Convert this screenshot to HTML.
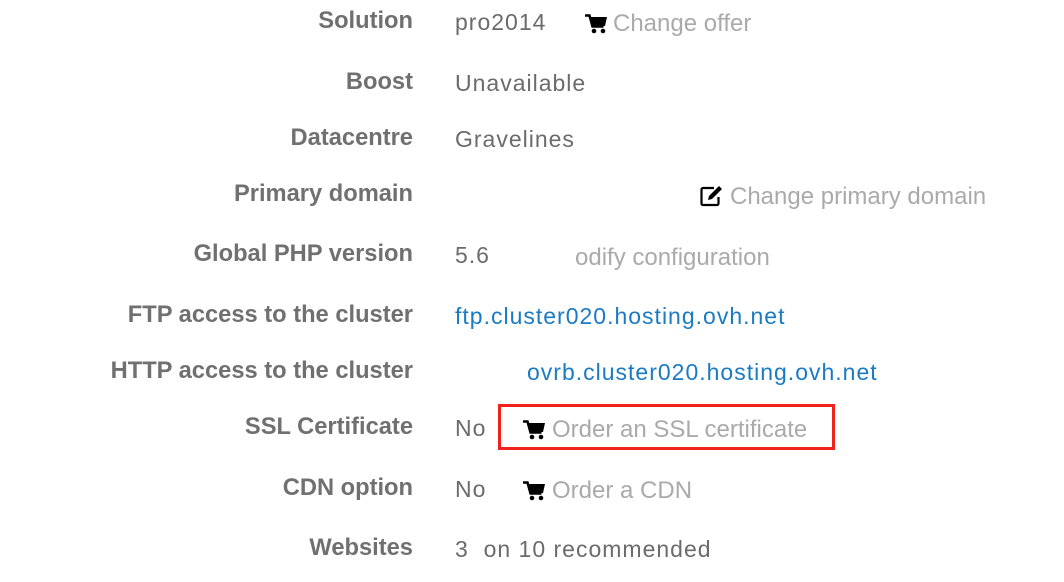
<!DOCTYPE html>
<html><head><meta charset="utf-8"><style>
body{margin:0;width:1064px;height:582px;background:#fff;position:relative;overflow:hidden;font-family:"Liberation Sans",sans-serif}
.l{position:absolute;right:651px;font-size:23.7px;font-weight:bold;color:#707070;line-height:26px;white-space:nowrap}
.v{position:absolute;font-size:23px;letter-spacing:1px;color:#6b6b6b;line-height:26px;white-space:nowrap}
.a{position:absolute;font-size:24px;color:#aaa;line-height:26px;white-space:nowrap}
.b{color:#1a7bc4}
.box{position:absolute;left:498px;top:404px;width:331px;height:40px;border:3px solid #f0221b}
svg{position:absolute}
</style></head><body>
<div class="l" style="top:8px">Solution</div>
<div class="l" style="top:69px">Boost</div>
<div class="l" style="top:125px">Datacentre</div>
<div class="l" style="top:181px">Primary domain</div>
<div class="l" style="top:241px">Global PHP version</div>
<div class="l" style="top:302px">FTP access to the cluster</div>
<div class="l" style="top:358px">HTTP access to the cluster</div>
<div class="l" style="top:414px">SSL Certificate</div>
<div class="l" style="top:475px">CDN option</div>
<div class="l" style="top:535px">Websites</div>

<div class="v" style="left:455px;top:9px">pro2014</div>
<div class="v" style="left:455px;top:70px">Unavailable</div>
<div class="v" style="left:455px;top:126px">Gravelines</div>
<div class="v" style="left:455px;top:242px">5.6</div>
<div class="v b" style="left:455px;top:303px">ftp.cluster020.hosting.ovh.net</div>
<div class="v b" style="left:527px;top:359px">ovrb.cluster020.hosting.ovh.net</div>
<div class="v" style="left:455px;top:415px">No</div>
<div class="v" style="left:455px;top:476px">No</div>
<div class="v" style="left:455px;top:536px">3&nbsp; on 10 recommended</div>

<div class="a" style="left:613px;top:11px">Change offer</div>
<div class="a" style="left:730px;top:184px">Change primary domain</div>
<div class="a" style="left:575px;top:245px">odify configuration</div>
<div class="a" style="left:552px;top:417px">Order an SSL certificate</div>
<div class="a" style="left:552px;top:478px">Order a CDN</div>
<div class="box"></div>

<svg style="left:585px;top:14px" width="22" height="20" viewBox="0 0 22 20"><path d="M0 1.5h4.5l3 11h11" fill="none" stroke="#000" stroke-width="2.5"/><path d="M5 3h17l-2 9H7.5z" fill="#000"/><circle cx="9" cy="17" r="2.3"/><circle cx="18" cy="17" r="2.3"/></svg>
<svg style="left:523px;top:420px" width="22" height="20" viewBox="0 0 22 20"><path d="M0 1.5h4.5l3 11h11" fill="none" stroke="#000" stroke-width="2.5"/><path d="M5 3h17l-2 9H7.5z" fill="#000"/><circle cx="9" cy="17" r="2.3"/><circle cx="18" cy="17" r="2.3"/></svg>
<svg style="left:523px;top:481px" width="22" height="20" viewBox="0 0 22 20"><path d="M0 1.5h4.5l3 11h11" fill="none" stroke="#000" stroke-width="2.5"/><path d="M5 3h17l-2 9H7.5z" fill="#000"/><circle cx="9" cy="17" r="2.3"/><circle cx="18" cy="17" r="2.3"/></svg>
<svg style="left:700px;top:185px" width="24" height="22" viewBox="0 0 24 22"><path d="M14 3H3a1.5 1.5 0 0 0-1.5 1.5v14A1.5 1.5 0 0 0 3 20h14a1.5 1.5 0 0 0 1.5-1.5V12" fill="none" stroke="#000" stroke-width="2.2"/><path d="M19 1l3 3-10 10-4 1 1-4z" fill="#000"/></svg>
</body></html>
